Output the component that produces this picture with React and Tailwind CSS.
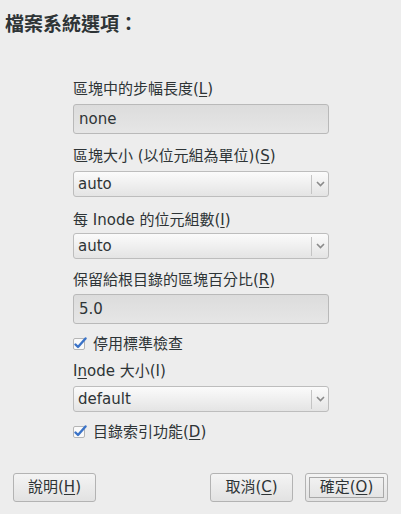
import React from 'react';

const font = { fontFamily: '"DejaVu Sans", "Noto Sans CJK TC", sans-serif' };

const U = ({ children }) => <span className="underline underline-offset-2">{children}</span>;

const Label = ({ children }) => (
    <div className="text-[15px] leading-[20px] text-[#2e3436]">{children}</div>
);

const Entry = ({ value }) => (
    <div className="h-[30px] w-[256px] rounded-[3px] border border-[#b9b9b9] bg-gradient-to-b from-[#dcdcdc] to-[#e6e6e6] px-[5px] flex items-center text-[15px] text-[#2e3436]">
        {value}
    </div>
);

const Combo = ({ value }) => (
    <div className="h-[26px] w-[256px] rounded-[3px] border border-[#bdbdbd] bg-gradient-to-b from-[#fbfbfb] to-[#e4e4e4] flex items-center text-[15px] text-[#2e3436]">
        <div className="flex-1 pl-[4px]">{value}</div>
        <div className="w-px h-[19px] bg-[#c4c4c4]" />
        <div className="w-[16px] flex justify-center">
            <svg width="9" height="6" viewBox="0 0 9 6">
                <path d="M1 1 L4.5 4.5 L8 1" fill="none" stroke="#8a8a8a" strokeWidth="1.6" />
            </svg>
        </div>
    </div>
);

const Check = ({ children }) => (
    <div className="flex items-center gap-[6px] text-[15px] leading-[20px] text-[#2e3436]">
        <svg width="14" height="14" viewBox="0 0 14 14">
            <rect x="0.5" y="1.5" width="11" height="11" rx="1.5" fill="#fafafa" stroke="#b5b5b5" />
            <path d="M2.5 7.5 L5 10 L12.5 1.5" fill="none" stroke="#3b73c7" strokeWidth="2.4" strokeLinecap="round" strokeLinejoin="round" />
        </svg>
        <span>{children}</span>
    </div>
);

const Button = ({ children, primary }) => (
    <div className="h-[29px] w-[83px] rounded-[3px] border border-[#b3b3b3] bg-gradient-to-b from-[#f4f4f4] to-[#e2e2e2] flex items-center justify-center p-[3px]">
        <div className={`w-full h-full flex items-center justify-center text-[15px] text-[#2e3436] ${primary ? 'border border-[#a9a9a9]' : ''}`}>
            {children}
        </div>
    </div>
);

const App = () => {
    return (
        <div className="w-[401px] h-[514px] bg-[#ededed] flex flex-col" style={font}>
            <div className="pl-[5px] pt-[12px] text-[19px] font-bold text-[#2e3436] leading-[24px]">檔案系統選項：</div>
            <div className="pl-[73px] pt-[43px] flex flex-col">
                <Label>區塊中的步幅長度(<U>L</U>)</Label>
                <div className="mt-[5px]"><Entry value="none" /></div>
                <div className="mt-[12px]"><Label>區塊大小 (以位元組為單位)(<U>S</U>)</Label></div>
                <div className="mt-[5px]"><Combo value="auto" /></div>
                <div className="mt-[13px]"><Label>每 Inode 的位元組數(<U>I</U>)</Label></div>
                <div className="mt-[3px]"><Combo value="auto" /></div>
                <div className="mt-[11px]"><Label>保留給根目錄的區塊百分比(<U>R</U>)</Label></div>
                <div className="mt-[4px]"><Entry value="5.0" /></div>
                <div className="mt-[10px]"><Check>停用標準檢查</Check></div>
                <div className="mt-[7px]"><Label>I<U>n</U>ode 大小(I)</Label></div>
                <div className="mt-[5px]"><Combo value="default" /></div>
                <div className="mt-[10px]"><Check>目錄索引功能(<U>D</U>)</Check></div>
            </div>
            <div className="mt-auto mb-[12px] px-[13px] flex items-center">
                <Button>說明(<U>H</U>)</Button>
                <div className="flex-1" />
                <Button>取消(<U>C</U>)</Button>
                <div className="w-[12px]" />
                <Button primary>確定(<U>O</U>)</Button>
            </div>
        </div>
    );
};

export default App;
